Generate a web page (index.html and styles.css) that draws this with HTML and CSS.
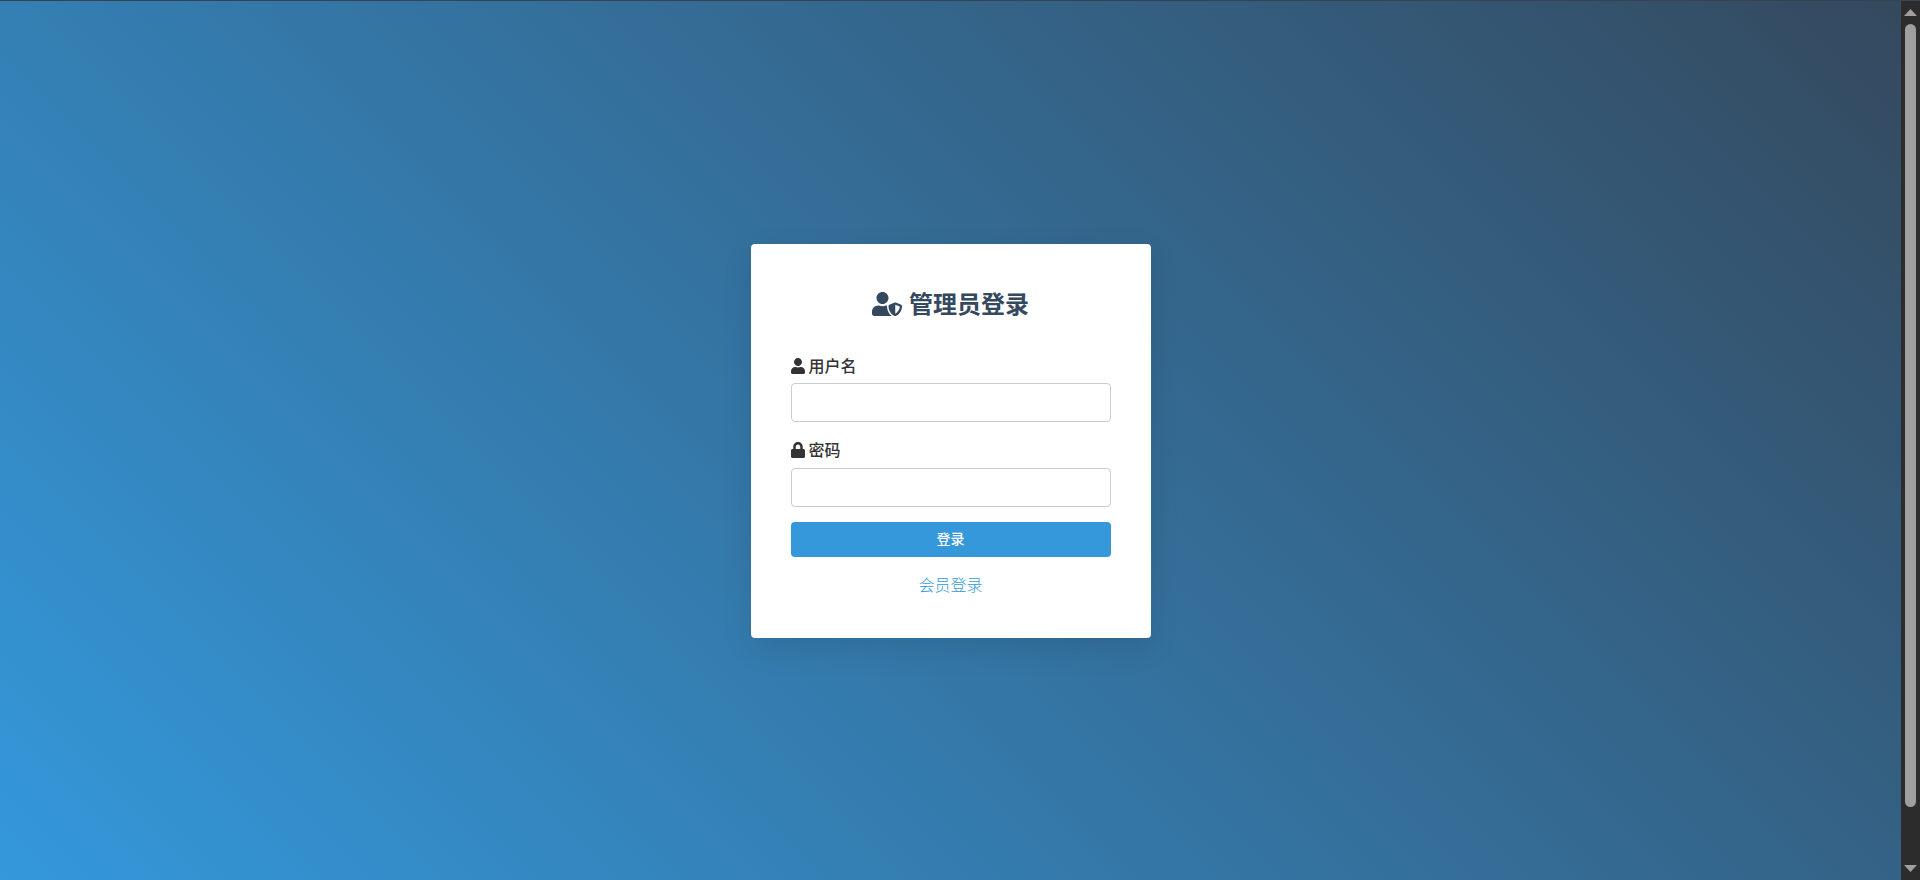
FILE: index.html
```html
<!DOCTYPE html>
<html lang="zh-CN">
<head>
<meta charset="utf-8">
<meta name="viewport" content="width=device-width, initial-scale=1">
<title>管理员登录</title>
<link rel="stylesheet" href="styles.css">
</head>
<body>
<div class="window">
  <main class="page">
    <div class="card">
      <h2 class="title">
        <svg class="icon" viewBox="0 0 640 512" aria-hidden="true"><path d="M622.3 271.1l-115.2-45c-4.1-1.6-12.6-3.7-22.2 0l-115.2 45c-10.7 4.2-17.7 14-17.7 24.9 0 111.6 68.7 188.8 132.9 213.9 9.6 3.7 18 1.6 22.2 0C558.4 489.9 640 420.5 640 296c0-10.9-7-20.7-17.7-24.9zM496 462.4V273.3l95.5 37.3c-5.6 87.1-60.9 135.4-95.5 151.8zM224 256c70.7 0 128-57.3 128-128S294.7 0 224 0 96 57.3 96 128s57.3 128 128 128zm96 40c0-2.5.8-4.8 1.1-7.2-2.5-.1-4.9-.8-7.5-.8h-16.7c-22.2 10.2-46.9 16-72.9 16s-50.6-5.8-72.9-16h-16.7C60.2 288 0 348.2 0 422.4V464c0 26.5 21.5 48 48 48h352c6.8 0 13.3-1.5 19.2-4-54-42.9-99.2-116.7-99.2-212z"/></svg>
        <span>管理员登录</span>
      </h2>
      <form>
        <div class="field">
          <label class="label" for="username">
            <svg class="icon" viewBox="0 0 448 512" aria-hidden="true"><path d="M224 256c70.7 0 128-57.3 128-128S294.7 0 224 0 96 57.3 96 128s57.3 128 128 128zm89.6 32h-16.7c-22.2 10.2-46.9 16-72.9 16s-50.6-5.8-72.9-16h-16.7C60.2 288 0 348.2 0 422.4V464c0 26.5 21.5 48 48 48h352c26.5 0 48-21.5 48-48v-41.6c0-74.2-60.2-134.4-134.4-134.4z"/></svg>
            <span>用户名</span>
          </label>
          <input class="input" type="text" id="username" name="username">
        </div>
        <div class="field">
          <label class="label" for="password">
            <svg class="icon" viewBox="0 0 448 512" aria-hidden="true"><path d="M400 224h-24v-72C376 68.2 307.8 0 224 0S72 68.2 72 152v72H48c-26.5 0-48 21.5-48 48v192c0 26.5 21.5 48 48 48h352c26.5 0 48-21.5 48-48V272c0-26.5-21.5-48-48-48zm-104 0H152v-72c0-39.7 32.3-72 72-72s72 32.3 72 72v72z"/></svg>
            <span>密码</span>
          </label>
          <input class="input" type="password" id="password" name="password">
        </div>
        <button class="submit" type="submit">登录</button>
      </form>
      <div class="links"><a class="link" href="#member">会员登录</a></div>
    </div>
  </main>
  <div class="scrollbar" aria-hidden="true">
    <svg class="arrow" viewBox="0 0 13 7"><path d="M6.500 0L13 7H0z"/></svg>
    <div class="track"><div class="thumb"></div></div>
    <svg class="arrow" viewBox="0 0 13 7"><path d="M0 0H13L6.500 7z"/></svg>
  </div>
</div>
</body>
</html>
```
FILE: styles.css
```css
* {
  box-sizing: border-box;
  margin: 0;
  padding: 0;
}

body {
  font-family: "Noto Sans CJK SC", sans-serif;
  font-size: 16px;
  line-height: 1.6;
  color: #333;
}

.window {
  display: flex;
  min-height: 100vh;
  border-top: 1px solid #364350;
}

.page {
  flex: 1;
  display: flex;
  align-items: center;
  justify-content: center;
  padding-top: 1px;
  background: linear-gradient(45deg, #3498db, #34495e);
}

.card {
  width: 100%;
  max-width: 400px;
  padding: 40px;
  border-radius: 4px;
  background: #fff;
  box-shadow: 0 10px 30px rgba(0, 0, 0, 0.1);
}

.icon {
  height: 1em;
  fill: currentColor;
}

.title {
  display: flex;
  align-items: center;
  justify-content: center;
  gap: 7px;
  margin-bottom: 30px;
  font-size: 24px;
  font-weight: 700;
  color: #34495e;
}

.field {
  margin-bottom: 15px;
}

.label {
  display: flex;
  align-items: center;
  gap: 4px;
  margin-bottom: 5px;
  font-weight: 500;
}

.input {
  display: block;
  width: 100%;
  height: 39px;
  padding: 10px;
  border: 1px solid #ccc;
  border-radius: 4px;
  background: #fff;
  font: inherit;
}

.submit {
  display: block;
  width: 100%;
  height: 35px;
  padding-bottom: 2px;
  border: 0;
  border-radius: 4px;
  background: #3498db;
  color: #fff;
  font-family: inherit;
  font-size: 14px;
  font-weight: 500;
  cursor: pointer;
}

.links {
  margin-top: 15px;
  text-align: center;
}

.link {
  color: #3498db;
  font-weight: 300;
  text-decoration: none;
}

.scrollbar {
  display: flex;
  flex-direction: column;
  align-items: center;
  gap: 8px;
  width: 19px;
  padding: 8px 0;
  background: #2c2c2c;
}

.arrow {
  width: 13px;
  height: 7px;
  fill: #9f9f9f;
}

.track {
  flex: 1;
  width: 11px;
}

.thumb {
  height: 94%;
  border-radius: 6px;
  background: #9f9f9f;
}
```
